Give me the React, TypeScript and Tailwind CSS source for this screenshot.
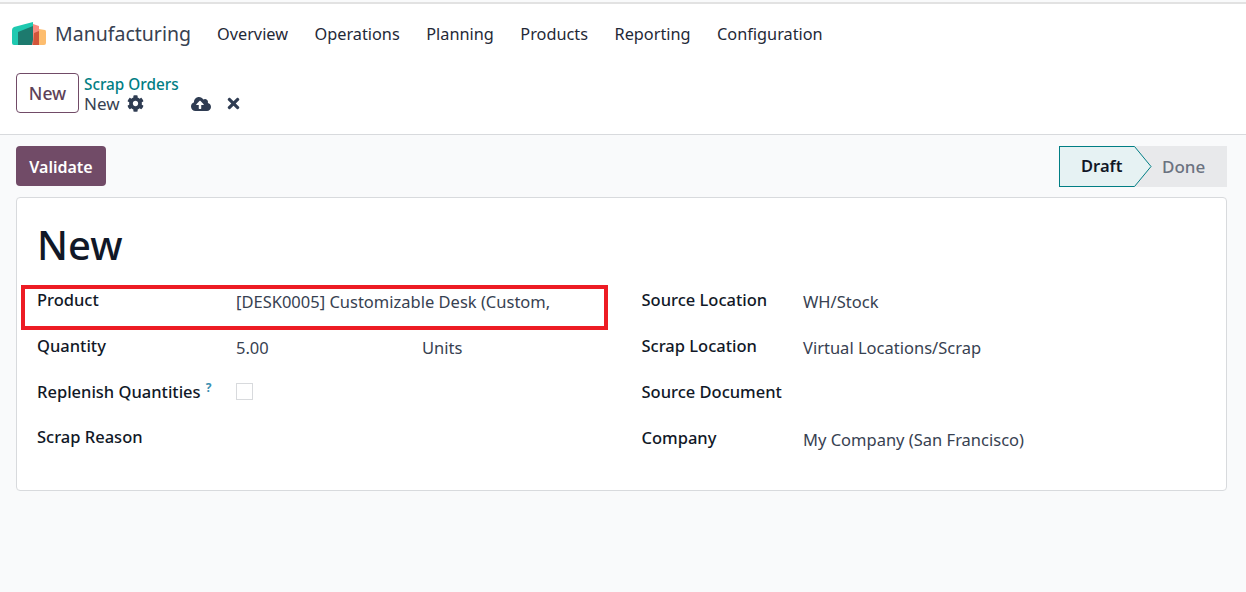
import { FaCog, FaCloudUploadAlt, FaTimes } from "react-icons/fa";

function Logo() {
  return (
    <svg width="35" height="24" viewBox="0 0 35 24" className="block">
      <path d="M0 8 Q0 6 2 5 L21 0 L21 23 L2 23 Q0 23 0 21 Z" fill="#1fc9b0" />
      <path d="M6 10 L21 4 L21 23 L6 23 Z" fill="#1d7a6e" />
      <path d="M21 2 L27 4 L27 23 L20 23 L21 18 Z" fill="#f98b80" />
      <path d="M27 7 L33 8 Q34 8 34 10 L34 21 Q34 23 32 23 L27 23 Z" fill="#fdbd6e" />
      <path d="M22 11 L27 9 L27 23 L21 23 Z" fill="#d2553a" />
    </svg>
  );
}

function Field({ label, value, unit, sup, check, h = "h-[46px]", w = "w-[199px]" }: { label: string; value?: string; unit?: string; sup?: boolean; check?: boolean; h?: string; w?: string }) {
  return (
    <div className={`flex ${h}`}>
      <div className={`${w} shrink-0 text-[#111827] font-medium leading-[24px] text-[16.5px] whitespace-nowrap`}>
        {label}
        {sup && <sup className="ml-[5px] text-[12px] font-bold text-[#3b8fb0]">?</sup>}
      </div>
      {check ? (
        <div className="mt-[3px] w-[17px] h-[17px] border border-[#d8dadd] bg-white" />
      ) : (
        <div className="flex text-[#374151] leading-[24px] mt-[2px] text-[16.5px] whitespace-nowrap">
          <span className={unit ? "w-[186px]" : ""}>{value}</span>
          {unit && <span>{unit}</span>}
        </div>
      )}
    </div>
  );
}

export default function App() {
  return (
    <div className="h-[592px] w-[1246px] overflow-hidden bg-[#f9fafb] font-['Noto_Sans',sans-serif] text-[16.5px]">
      <div className="bg-white border-b border-[#d8dadd] h-[133px] border-t-[2px] border-t-[#e2e2e2] mt-[2px]">
        <div className="flex items-center h-[60px] pl-[12px] pr-4">
          <Logo />
          <span className="ml-[8px] text-[19.5px] text-[#374151]">Manufacturing</span>
          <nav className="flex ml-[26px] gap-[26.5px] text-[#1f2937] text-[16.3px]">
            <span>Overview</span>
            <span>Operations</span>
            <span>Planning</span>
            <span>Products</span>
            <span>Reporting</span>
            <span>Configuration</span>
          </nav>
        </div>
        <div className="flex items-start pl-[16px] mt-[9px]">
          <button className="w-[63px] h-[40px] pt-[1px] rounded-[4px] border border-[#714b67] bg-white text-[#5d4258] font-medium text-[17.5px] leading-none">New</button>
          <div className="ml-[5px] mt-[2px]">
            <div className="text-[#017e84] font-medium text-[15.3px] leading-[18px]">Scrap Orders</div>
            <div className="flex items-center text-[#374151] text-[17px] leading-[21px]">
              <span>New</span>
              <FaCog className="ml-[7px] text-[#2f3c52] text-[17px]" />
              <FaCloudUploadAlt className="ml-[47px] text-[#2f3c52] text-[20px]" />
              <FaTimes className="ml-[14px] text-[#2f3c52] text-[17px]" />
            </div>
          </div>
        </div>
      </div>

      <div className="flex items-center justify-between pr-[19px] pl-[16px] mt-[11px] h-[40px]">
        <button className="w-[90px] h-[40px] pt-[1px] rounded-[4px] bg-[#714b67] text-white font-semibold text-[16px]">Validate</button>
        <div className="flex h-[41px] w-[168px] bg-[#e8e9eb] relative">
          <div className="relative w-[75px] h-full pt-[1px] bg-[#e6f2f3] border-y border-l border-[#017e84] flex items-center pl-[21px] font-semibold text-[#111827] text-[16.5px]">
            Draft
            <svg width="18" height="41" viewBox="0 0 18 41" className="absolute left-[74px] -top-[1px]">
              <path d="M0 0 L0 41 L0.5 40.5 L17 20.5 L0.5 0.5 Z" fill="#e6f2f3" />
              <path d="M0 0.5 L0.5 0.5 L17 20.5 L0.5 40.5 L0 40.5" fill="none" stroke="#017e84" />
            </svg>
          </div>
          <div className="ml-[28px] pt-[1px] flex items-center text-[#6b7280] font-medium text-[17px]">Done</div>
        </div>
      </div>

      <div className="mt-[11px] ml-[16px] w-[1211px] h-[294px] bg-white border border-[#d8dadd] rounded-[4px] px-[20px] pt-[19px] relative">
        <h1 className="text-[40px] leading-[56px] font-medium text-[#111827]">New</h1>
        <div className="flex mt-[15px]">
          <div className="w-[604.5px] shrink-0">
            <Field label="Product" value="[DESK0005] Customizable Desk (Custom," />
            <Field label="Quantity" value="5.00" unit="Units" />
            <Field label="Replenish Quantities" sup check h="h-[45px]" />
            <Field label="Scrap Reason" />
          </div>
          <div className="flex-1">
            <Field label="Source Location" value="WH/Stock" w="w-[161.5px]" />
            <Field label="Scrap Location" value="Virtual Locations/Scrap" w="w-[161.5px]" />
            <Field label="Source Document" w="w-[161.5px]" />
            <Field label="Company" value="My Company (San Francisco)" w="w-[161.5px]" />
          </div>
        </div>
        <div className="absolute left-[4px] top-[87px] w-[587px] h-[45px] border-[4px] border-[#ed1c24]" />
      </div>
    </div>
  );
}
